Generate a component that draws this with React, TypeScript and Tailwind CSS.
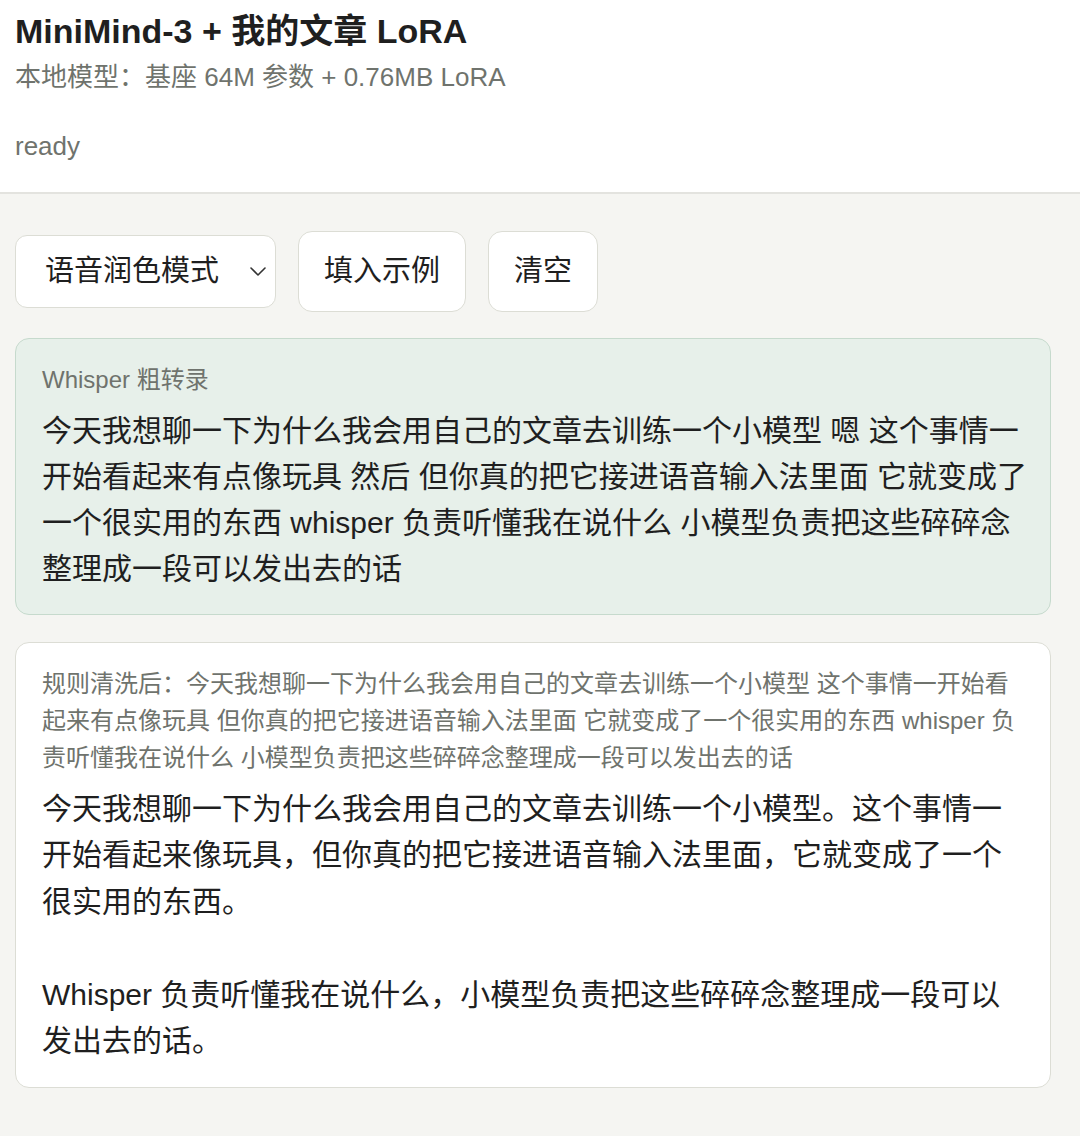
const FONT = "font-['Liberation_Sans','Noto_Sans_CJK_SC',sans-serif]";

const raw =
  "今天我想聊一下为什么我会用自己的文章去训练一个小模型 嗯 这个事情一开始看起来有点像玩具 然后 但你真的把它接进语音输入法里面 它就变成了一个很实用的东西 whisper 负责听懂我在说什么 小模型负责把这些碎碎念整理成一段可以发出去的话";

const cleaned =
  "规则清洗后：今天我想聊一下为什么我会用自己的文章去训练一个小模型 这个事情一开始看起来有点像玩具 但你真的把它接进语音输入法里面 它就变成了一个很实用的东西 whisper 负责听懂我在说什么 小模型负责把这些碎碎念整理成一段可以发出去的话";

const polished =
  "今天我想聊一下为什么我会用自己的文章去训练一个小模型。这个事情一开始看起来像玩具，但你真的把它接进语音输入法里面，它就变成了一个很实用的东西。\n\nWhisper 负责听懂我在说什么，小模型负责把这些碎碎念整理成一段可以发出去的话。";

function Chevron() {
  return (
    <svg width="16" height="9" viewBox="0 0 16 9" fill="none" className="shrink-0">
      <path d="M1 1l7 7 7-7" stroke="#333" strokeWidth="1.6" strokeLinecap="round" strokeLinejoin="round" />
    </svg>
  );
}

export default function App() {
  return (
    <div className={`${FONT} min-h-screen bg-[#f5f5f2] text-[#1f1f1f]`}>
      {/* Header */}
      <header className="bg-white pl-[15px] pt-[11px] pb-[28px] border-b-2 border-[#e3e3df]">
        <h1 className="text-[34px] leading-[40px] font-bold">MiniMind-3 + 我的文章 LoRA</h1>
        <p className="mt-[8px] text-[26px] leading-[36px] text-[#6f736d]">
          本地模型：基座 64M 参数 + 0.76MB LoRA
        </p>
        <p className="mt-[33px] text-[26px] leading-[36px] text-[#6f736d]">ready</p>
      </header>

      <main className="ml-[15px] w-[1036px] pt-[37px] pb-[49px]">
        {/* Controls */}
        <div className="flex items-center gap-[22px]">
          <div className="flex h-[73px] w-[261px] items-center justify-between rounded-[12px] border border-[#dcddd5] bg-white pl-[29px] pr-[9px]">
            <span className="text-[29px] leading-none">语音润色模式</span>
            <Chevron />
          </div>
          <button className="h-[81px] rounded-[14px] border border-[#dcddd5] bg-white px-[25px] text-[29px] leading-none">
            填入示例
          </button>
          <button className="h-[81px] rounded-[14px] border border-[#dcddd5] bg-white px-[25px] text-[29px] leading-none">
            清空
          </button>
        </div>

        {/* Raw transcript */}
        <section className="mt-[26px] rounded-[14px] border border-[#c6dacd] bg-[#e7f0ea] pl-[26px] pt-[24px] pb-[22px]">
          <div className="text-[24px] leading-[34px] text-[#6f736d]">Whisper 粗转录</div>
          <p className="mt-[11px] w-[986px] text-[30px] leading-[46px]">{raw}</p>
        </section>

        {/* Cleaned + polished */}
        <section className="mt-[27px] rounded-[14px] border border-[#dcddd5] bg-white pl-[26px] pt-[22px] pb-[23px]">
          <p className="w-[986px] text-[24px] leading-[37px] text-[#6f736d]">{cleaned}</p>
          <p className="mt-[10px] w-[986px] whitespace-pre-wrap text-[30px] leading-[46.4px]">{polished}</p>
        </section>
      </main>
    </div>
  );
}
